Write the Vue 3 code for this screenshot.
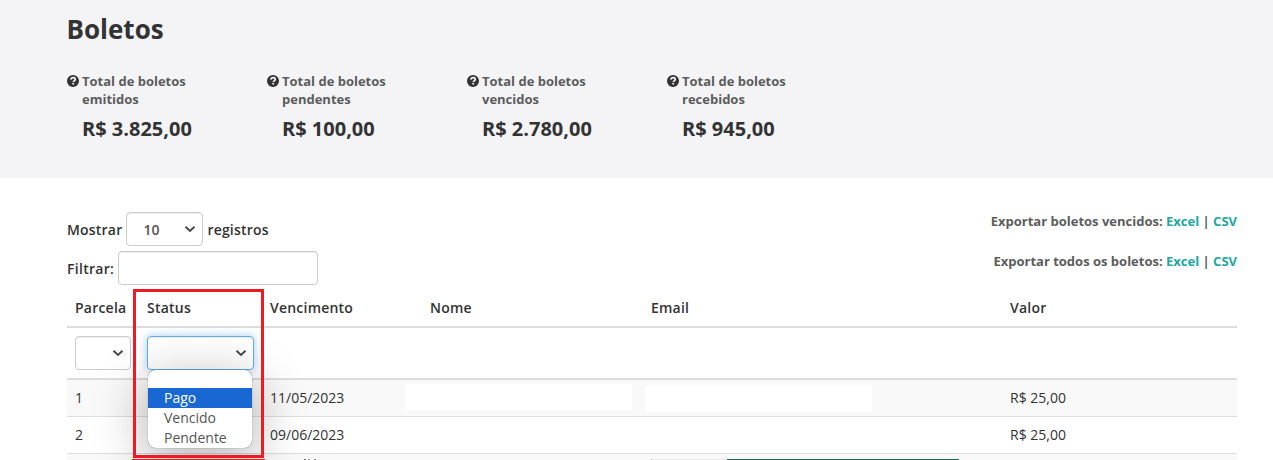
<template>
  <div class="boletos">
    <header class="boletos__header">
      <h1 class="boletos__title">Boletos</h1>
      <div class="boletos__totals">
        <div v-for="total in totals" :key="total.label" class="total">
          <svg class="total__icon" viewBox="0 0 12 12" aria-hidden="true">
            <circle cx="6" cy="6" r="6" fill="#333" />
            <path d="M3.900 4.700C4.100 3.300 5 2.700 6.100 2.700c1.300 0 2.100.7 2.100 1.700 0 1.500-1.900 1.400-1.900 2.700" fill="none" stroke="#f4f4f7" stroke-width="1.700" />
            <rect x="5.300" y="7.900" width="1.800" height="1.600" fill="#f4f4f7" />
          </svg>
          <div>
            <div class="total__label">Total de boletos<br>{{ total.label }}</div>
            <div class="total__value">{{ total.value }}</div>
          </div>
        </div>
      </div>
    </header>

    <main class="boletos__content">
      <div class="toolbar">
        <div class="toolbar__filters">
          <label class="toolbar__row">
            <span class="toolbar__text">Mostrar</span>
            <span class="select select--length">
              <span>{{ pageLength }}</span>
              <svg class="select__arrow" viewBox="0 0 12 8"><path d="M1.500 1.700 6 5.900l4.500-4.200" /></svg>
            </span>
            <span class="toolbar__text">registros</span>
          </label>
          <label class="toolbar__row">
            <span class="toolbar__text toolbar__text--filter">Filtrar:</span>
            <input v-model="search" type="text" class="toolbar__input">
          </label>
        </div>
        <div class="toolbar__exports">
          <div v-for="item in exportsList" :key="item">
            {{ item }}: <a href="#" @click.prevent>Excel</a> | <a href="#" @click.prevent>CSV</a>
          </div>
        </div>
      </div>

      <table class="table">
        <colgroup>
          <col class="col-parcela">
          <col class="col-status">
          <col class="col-vencimento">
          <col class="col-nome">
          <col class="col-email">
          <col>
        </colgroup>
        <thead>
          <tr class="table__titles">
            <th v-for="column in columns" :key="column">{{ column }}</th>
          </tr>
          <tr class="table__search">
            <th>
              <span class="select select--parcela">
                <svg class="select__arrow" viewBox="0 0 12 8"><path d="M1.500 1.700 6 5.900l4.500-4.200" /></svg>
              </span>
            </th>
            <th>
              <div class="status">
                <span class="select select--status" @click="open = !open">
                  <svg class="select__arrow" viewBox="0 0 12 8"><path d="M1.500 1.700 6 5.900l4.500-4.200" /></svg>
                </span>
                <ul v-if="open" class="status__menu">
                  <li
                    v-for="option in statusOptions"
                    :key="option"
                    :class="{ 'is-active': option === status }"
                    @mouseenter="status = option"
                  >{{ option }}</li>
                </ul>
                <div class="status__frame" />
                <div class="status__frame-next" />
              </div>
            </th>
            <th colspan="4" />
          </tr>
        </thead>
        <tbody>
          <tr v-for="row in rows" :key="row.parcela">
            <td>{{ row.parcela }}</td>
            <td />
            <td>{{ row.vencimento }}</td>
            <td><div v-if="row.masked" class="mask mask--nome" /></td>
            <td><div v-if="row.masked" class="mask mask--email" /></td>
            <td>{{ row.valor }}</td>
          </tr>
          <tr>
            <td colspan="2" />
            <td><div class="next-date" /></td>
            <td />
            <td><div class="next-bar" /></td>
            <td />
          </tr>
        </tbody>
      </table>
    </main>
  </div>
</template>

<script setup>
import { ref } from 'vue'

const pageLength = ref(10)
const search = ref('')
const open = ref(true)
const status = ref('Pago')

const totals = [
  { label: 'emitidos', value: 'R$ 3.825,00' },
  { label: 'pendentes', value: 'R$ 100,00' },
  { label: 'vencidos', value: 'R$ 2.780,00' },
  { label: 'recebidos', value: 'R$ 945,00' }
]

const exportsList = ['Exportar boletos vencidos', 'Exportar todos os boletos']
const columns = ['Parcela', 'Status', 'Vencimento', 'Nome', 'Email', 'Valor']
const statusOptions = ['', 'Pago', 'Vencido', 'Pendente']

const rows = [
  { parcela: 1, vencimento: '11/05/2023', valor: 'R$ 25,00', masked: true },
  { parcela: 2, vencimento: '09/06/2023', valor: 'R$ 25,00', masked: false }
]
</script>

<style>
body {
  margin: 0;
  overflow: hidden;
}
</style>

<style scoped>
.boletos {
  height: 460px;
  overflow: hidden;
  background: #fff;
  color: #333;
  font-family: 'Open Sans', 'Noto Sans', sans-serif;
  font-size: 14px;
  line-height: 20px;
}

.boletos * {
  box-sizing: border-box;
}

.boletos__header {
  height: 178px;
  padding: 11px 36px 0 66.5px;
  background: #f4f4f7;
}

.boletos__title {
  margin: 0;
  font-size: 26px;
  font-weight: 700;
  line-height: 36px;
}

.boletos__totals {
  display: flex;
  margin-top: 25px;
}

.total {
  display: flex;
  width: 200px;
  gap: 3.5px;
}

.total__icon {
  flex: none;
  width: 12px;
  height: 12px;
  margin-top: 3px;
}

.total__label {
  color: #5c5c5c;
  font-size: 13px;
  font-weight: 700;
  line-height: 18px;
}

.total__value {
  margin-top: 7px;
  font-size: 20px;
  font-weight: 700;
  line-height: 28px;
}

.boletos__content {
  padding: 34px 36px 0 67px;
}

.toolbar {
  display: flex;
  justify-content: space-between;
  height: 77px;
}

.toolbar__filters {
  display: flex;
  flex-direction: column;
  gap: 5px;
}

.toolbar__row {
  display: flex;
  align-items: center;
  gap: 4px;
  height: 34px;
  font-weight: 600;
}

.toolbar__text {
  padding-top: 2px;
  letter-spacing: 0.2px;
}

.toolbar__text--filter {
  letter-spacing: 0.3px;
}

.toolbar__input {
  width: 200px;
  height: 34px;
  padding: 6px 12px;
  border: 1px solid #ccc;
  border-radius: 4px;
  box-shadow: inset 0 1px 1px rgba(0, 0, 0, 0.075);
  font: inherit;
}

.toolbar__exports {
  display: flex;
  flex-direction: column;
  gap: 20px;
  margin-top: -1px;
  color: #5c5c5c;
  font-size: 13px;
  font-weight: 700;
  text-align: right;
}

.toolbar__exports a {
  color: #1ca8a0;
  text-decoration: none;
}

.select {
  display: flex;
  align-items: center;
  justify-content: space-between;
  height: 34px;
  padding: 0 6px 0 17px;
  border: 1px solid #ccc;
  border-radius: 4px;
  background: #fff;
  box-shadow: inset 0 1px 1px rgba(0, 0, 0, 0.075);
  color: #555;
}

.select--length {
  width: 77px;
  padding-top: 2px;
  padding-left: 16px;
}

.select--length .select__arrow {
  margin-top: -2px;
}

.select--parcela {
  width: 56px;
}

.select--status {
  width: 107px;
  border-color: #66afe9;
  box-shadow: inset 0 1px 1px rgba(0, 0, 0, 0.075), 0 0 8px rgba(102, 175, 233, 0.6);
}

.select__arrow {
  width: 12px;
  height: 8px;
  margin-left: auto;
}

.select__arrow path {
  fill: none;
  stroke: #4a4a4a;
  stroke-width: 2;
}

.table {
  width: 100%;
  border-collapse: separate;
  border-spacing: 0;
  table-layout: fixed;
}

.col-parcela {
  width: 72px;
}

.col-status {
  width: 123px;
}

.col-vencimento {
  width: 160px;
}

.col-nome {
  width: 221px;
}

.col-email {
  width: 359px;
}

.table th,
.table td {
  padding: 0 8px;
  text-align: left;
}

.table th {
  border-bottom: 2px solid #ddd;
  font-weight: 600;
  letter-spacing: 0.22px;
}

.table__titles th {
  height: 39px;
}

.table__search th {
  height: 52px;
}

.table td {
  height: 37px;
  border-top: 1px solid #ddd;
}

.table tbody tr:first-child td {
  height: 36px;
  border-top: 0;
}

.table tbody tr:nth-child(odd) td {
  background: #f9f9f9;
}

/* name and e-mail of the payer are hidden */
.mask {
  width: 227px;
  height: 27px;
  background: #fff;
}

.mask--nome {
  margin: 0 0 1px -25px;
}

.mask--email {
  margin: 1px 0 0 -6px;
}

.next-date {
  width: 12px;
  height: 26px;
  margin-left: 34px;
  background: linear-gradient(90deg, #777 2px, transparent 2px 4px, #999 4px 6px, transparent 6px 10px, #888 10px);
}

.next-bar {
  width: 308px;
  height: 26px;
  background: linear-gradient(90deg, #aaa 1px, #ebebeb 1px 76px, #1d6b52 76px);
}

.status {
  position: relative;
  width: 107px;
}

.status__menu {
  position: absolute;
  z-index: 1;
  top: 34px;
  left: 1px;
  width: 104px;
  height: 78px;
  margin: 0;
  padding: 0;
  overflow: hidden;
  border-radius: 8px;
  background: #fff;
  box-shadow: 0 0 1px rgba(0, 0, 0, 0.7), 0 12px 50px 4px rgba(0, 0, 0, 0.28);
  color: #555;
  font-weight: 400;
  letter-spacing: 0;
  list-style: none;
}

.status__menu li {
  height: 20px;
  padding-left: 16px;
}

.status__menu li:first-child {
  height: 18px;
}

.status__menu .is-active {
  background: #1967d2;
  color: #fff;
}

.status__frame {
  position: absolute;
  z-index: 2;
  top: -47px;
  left: -14px;
  width: 131px;
  height: 169px;
  border: 3px solid #ed1c24;
  pointer-events: none;
}

.status__frame-next {
  position: absolute;
  z-index: 2;
  top: 123px;
  left: -15px;
  width: 133px;
  height: 3px;
  background: #ed1c24;
}
</style>
